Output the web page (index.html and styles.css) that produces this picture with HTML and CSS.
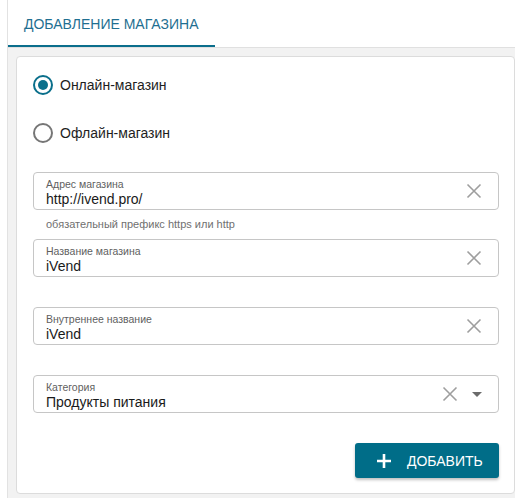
FILE: index.html
```html
<!DOCTYPE html>
<html lang="ru">
<head>
<meta charset="utf-8">
<link rel="stylesheet" href="styles.css">
</head>
<body>
<div class="page">
  <div class="tabs">
    <div class="tab">ДОБАВЛЕНИЕ МАГАЗИНА</div>
  </div>
  <div class="content">
    <div class="card">
      <div class="radios">
        <label class="radio-row"><span class="radio checked"></span><span class="radio-label">Онлайн-магазин</span></label>
        <label class="radio-row"><span class="radio"></span><span class="radio-label">Офлайн-магазин</span></label>
      </div>

      <div class="group first">
        <div class="field">
          <div class="field-body">
            <div class="field-label">Адрес магазина</div>
            <div class="field-value">http://ivend.pro/</div>
          </div>
          <div class="field-icons">
            <svg class="clear" width="16" height="16" viewBox="0 0 16 16"><path d="M1.5 1.5 L14.5 14.5 M14.5 1.5 L1.5 14.5" /></svg>
          </div>
        </div>
        <div class="hint">обязательный префикс https или http</div>
      </div>

      <div class="group">
        <div class="field">
          <div class="field-body">
            <div class="field-label">Название магазина</div>
            <div class="field-value">iVend</div>
          </div>
          <div class="field-icons">
            <svg class="clear" width="16" height="16" viewBox="0 0 16 16"><path d="M1.5 1.5 L14.5 14.5 M14.5 1.5 L1.5 14.5" /></svg>
          </div>
        </div>
      </div>

      <div class="group">
        <div class="field">
          <div class="field-body">
            <div class="field-label">Внутреннее название</div>
            <div class="field-value">iVend</div>
          </div>
          <div class="field-icons">
            <svg class="clear" width="16" height="16" viewBox="0 0 16 16"><path d="M1.5 1.5 L14.5 14.5 M14.5 1.5 L1.5 14.5" /></svg>
          </div>
        </div>
      </div>

      <div class="field">
        <div class="field-body">
          <div class="field-label">Категория</div>
          <div class="field-value">Продукты питания</div>
        </div>
        <div class="field-icons">
          <svg class="clear" width="16" height="16" viewBox="0 0 16 16"><path d="M1.5 1.5 L14.5 14.5 M14.5 1.5 L1.5 14.5" /></svg>
          <svg class="caret" width="10" height="5" viewBox="0 0 10 5"><path d="M0 0 L10 0 L5 5 Z" /></svg>
        </div>
      </div>

      <div class="actions">
        <button class="btn">
          <svg class="plus" width="16" height="16" viewBox="0 0 16 16"><path d="M8 1 V15 M1 8 H15" /></svg>
          <span>ДОБАВИТЬ</span>
        </button>
      </div>
    </div>
  </div>
</div>
</body>
</html>
```

FILE: styles.css
```css
* { box-sizing: border-box; }

html, body {
  margin: 0;
  padding: 0;
  background: #fff;
  font-family: "Liberation Sans", Arial, sans-serif;
  color: #212121;
}

.page {
  margin-left: 7px;
  border-left: 1px solid #e2e2e2;
  height: 498px;
  display: flex;
  flex-direction: column;
}

.tabs {
  height: 48px;
  border-bottom: 1px solid #e0e0e0;
  display: flex;
}

.tab {
  height: 47px;
  padding: 2px 16px 0;
  display: flex;
  align-items: center;
  border-bottom: 2px solid #0b6e8c;
  color: #1f6f91;
  font-size: 14px;
}

.content {
  flex: 1;
  background: #f2f2f2;
  padding: 8px 0 4px 8px;
}

.card {
  background: #fff;
  border: 1px solid #dcdcdc;
  border-radius: 4px;
  padding: 4px 15px 15px 16px;
}

.radios {
  margin-bottom: 15px;
}

.radio-row {
  height: 48px;
  display: flex;
  align-items: center;
  gap: 7px;
}

.radio {
  width: 20px;
  height: 20px;
  border-radius: 50%;
  border: 2px solid #767676;
  display: flex;
  align-items: center;
  justify-content: center;
}

.radio.checked {
  border-color: #0a6f8b;
}

.radio.checked::after {
  content: "";
  width: 10px;
  height: 10px;
  border-radius: 50%;
  background: #0a6f8b;
}

.radio-label {
  font-size: 14px;
  color: #1e1e1e;
}

.group {
  min-height: 68px;
}

.group.first {
  min-height: 67px;
}

.field {
  height: 38px;
  border: 1px solid #c6c6c6;
  border-radius: 4px;
  display: flex;
  align-items: center;
  padding: 0 16px 0 12px;
}

.field-body {
  flex: 1;
  align-self: flex-start;
  padding-top: 5px;
}

.field-label {
  font-size: 10.5px;
  line-height: 13px;
  color: #5f5f5f;
}

.field-value {
  font-size: 14px;
  line-height: 17px;
  color: #1a1a1a;
}

.field-icons {
  display: flex;
  align-items: center;
  gap: 14px;
}

.clear path {
  stroke: #9e9e9e;
  stroke-width: 1.6;
  fill: none;
}

.caret path {
  fill: #6b6b6b;
}

.hint {
  font-size: 11px;
  line-height: 13px;
  color: #707070;
  padding: 8px 0 0 13px;
}

.actions {
  display: flex;
  justify-content: flex-end;
  margin-top: 30px;
}

.btn {
  height: 35px;
  width: 144px;
  border: none;
  border-radius: 3px;
  background: #006d88;
  color: #fff;
  font-family: "Liberation Sans", Arial, sans-serif;
  font-size: 14px;
  display: flex;
  align-items: center;
  padding: 0 0 0 21px;
  gap: 15px;
  box-shadow: 0 2px 3px rgba(0, 0, 0, 0.25);
}

.plus path {
  stroke: #fff;
  stroke-width: 2.6;
  fill: none;
}
```
